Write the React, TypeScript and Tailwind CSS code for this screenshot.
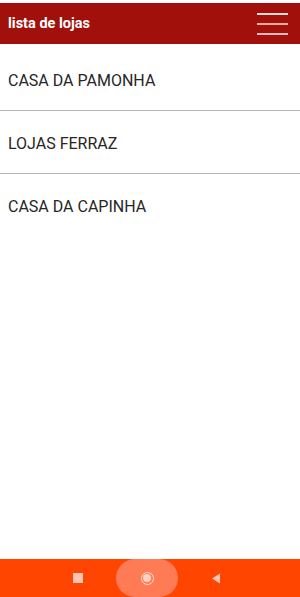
import React from "react";

export default function App() {
  const items = ["CASA DA PAMONHA", "LOJAS FERRAZ", "CASA DA CAPINHA"];
  return (
    <div className="flex h-[597px] w-[300px] flex-col bg-white font-['Roboto',sans-serif]">
      <div className="h-[3px] bg-white" />
      <div className="flex h-[41px] items-center justify-between bg-[#a1100a] pl-[8px] pr-[12px]">
        <span className="text-[14.5px] font-bold text-white">lista de lojas</span>
        <div className="flex w-[31px] flex-col gap-[8px]">
          <div className="h-[2px] bg-[#f6dcd8]" />
          <div className="h-[2px] bg-[#f0aaa4]" />
          <div className="h-[2px] bg-[#f3bcb6]" />
        </div>
      </div>
      <div className="flex flex-col pt-[4px]">
        {items.map((t, i) => (
          <div
            key={t}
            className={`flex h-[63px] items-center px-[8px] pt-[3px] text-[16px] text-[#262626] ${
              i < 2 ? "border-b border-[#b5b5b5]" : ""
            }`}
          >
            {t}
          </div>
        ))}
      </div>
      <div className="flex-1" />
      <div className="flex h-[38px] items-center justify-center bg-[#ff4500] pr-[6px]">
        <div className="flex w-[76px] justify-center">
          <div className="h-[10px] w-[10px] bg-[#ffc6b5]" />
        </div>
        <div className="flex h-[38px] w-[62px] items-center justify-center rounded-full bg-[#ff7b55]">
          <div className="flex h-[13px] w-[13px] items-center justify-center rounded-full border-[1.5px] border-[#ffe0d6]">
            <div className="h-[8px] w-[8px] rounded-full bg-[#ffd2c4]" />
          </div>
        </div>
        <div className="flex w-[76px] justify-center">
          <svg width="10" height="11" viewBox="0 0 10 11">
            <polygon points="9,0.5 9,10.5 1,5.5" fill="#ffc6b5" />
          </svg>
        </div>
      </div>
    </div>
  );
}
